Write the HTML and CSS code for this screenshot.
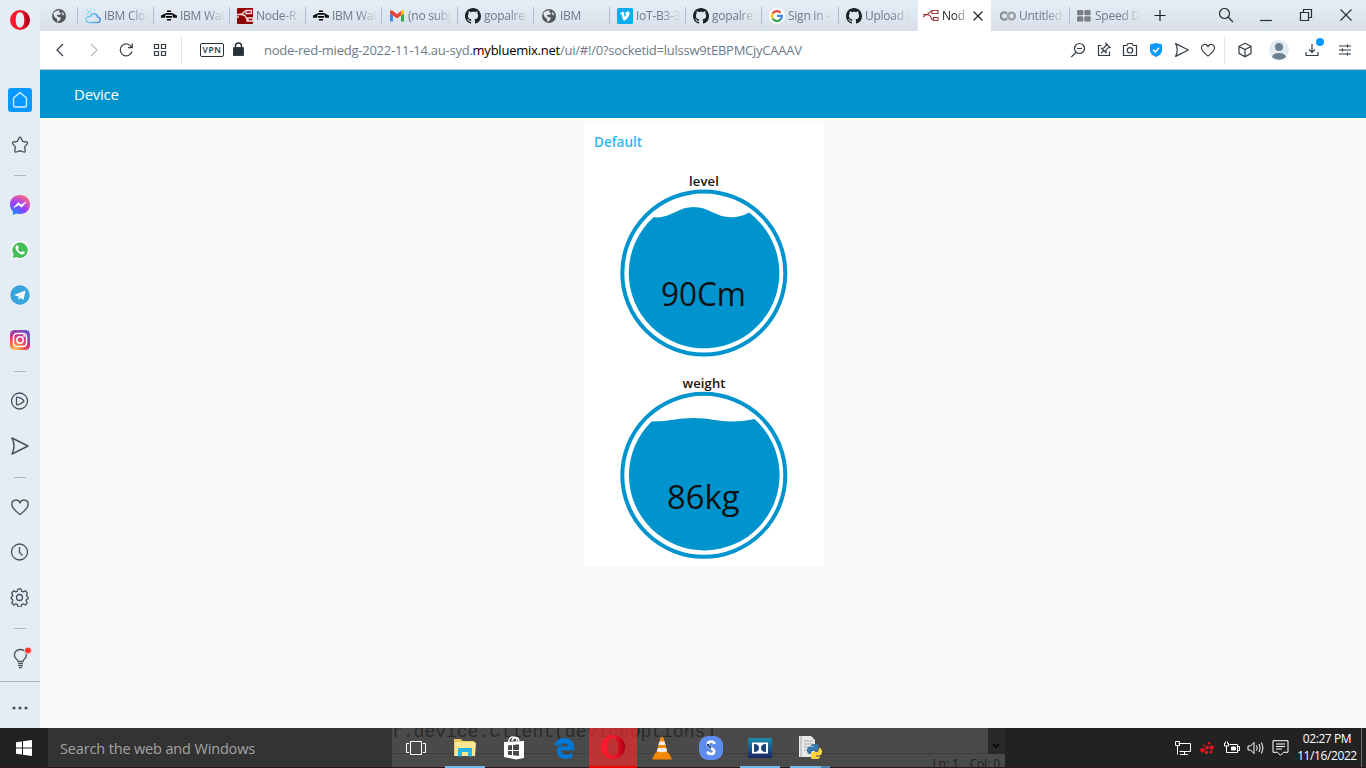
FILE: index.html
```html
<!DOCTYPE html>
<html lang="en">
<head>
<meta charset="utf-8">
<title>Node-RED Dashboard</title>
<link rel="stylesheet" href="styles.css">
</head>
<body>
<svg class="defs" width="0" height="0" aria-hidden="true">
  <symbol id="globe" viewBox="0 0 16 16"><circle cx="8" cy="8" r="7" fill="#55585b"/><path d="M2.300 5.500C4 2.800 6 2.200 9 2.500L8 4 10.500 5.500 8.500 6.800 5.500 7 7 9 10 9.500 9 12 6.500 14 6 11 3.500 9z" fill="#dfe7ee"/><path d="M11 3.500l2.500 3-2 1z" fill="#dfe7ee"/></symbol>
  <symbol id="bee" viewBox="0 0 16 16"><path d="M6 2.500h4v1.500H6zM5 5h6v1.800H5zM5 8h6v1.800H5zM6 11h4v1.500H6z" fill="#000"/><path d="M5 5L0 7.500v2.300h4zM11 5l5 2.500v2.300h-4z" fill="#111"/></symbol>
  <symbol id="github" viewBox="0 0 16 16"><path fill="#1c2129" d="M8 0C3.580 0 0 3.580 0 8c0 3.540 2.290 6.530 5.470 7.590.4.070.55-.17.55-.38 0-.19-.01-.82-.01-1.490-2.010.37-2.530-.49-2.690-.94-.09-.23-.48-.94-.82-1.130-.28-.15-.68-.52-.01-.53.63-.01 1.080.58 1.230.82.72 1.210 1.870.87 2.330.66.07-.52.28-.87.51-1.070-1.780-.2-3.640-.89-3.640-3.950 0-.87.31-1.590.82-2.150-.08-.2-.36-1.020.08-2.120 0 0 .67-.21 2.200.82.64-.18 1.320-.27 2-.27s1.360.09 2 .27c1.530-1.040 2.200-.82 2.200-.82.44 1.100.16 1.920.08 2.120.51.56.82 1.270.82 2.150 0 3.070-1.870 3.750-3.650 3.950.29.25.54.73.54 1.480 0 1.070-.01 1.930-.01 2.200 0 .21.15.46.55.38A8.010 8.010 0 0 0 16 8c0-4.420-3.580-8-8-8z"/></symbol>
  <symbol id="plane" viewBox="0 0 20 20"><path d="M2 2l16 8-16 8q4-8 0-16z" fill="none" stroke="currentColor" stroke-width="1.500" stroke-linejoin="round"/></symbol>
  <symbol id="heart" viewBox="0 0 20 20"><path d="M10 17.500C6.500 14.800 1.800 11.500 1.800 7.200 1.800 2.600 7.800 1.300 10 5.600 12.200 1.300 18.200 2.600 18.200 7.200 18.200 11.500 13.500 14.800 10 17.500z" fill="none" stroke="currentColor" stroke-width="1.400"/></symbol>
  <symbol id="opera" viewBox="0 0 20 20"><path fill-rule="evenodd" d="M10 0a10 10 0 1 0 0 20a10 10 0 0 0 0-20zM10 2.300c2.800 0 4.300 3.500 4.300 7.700s-1.500 7.700-4.300 7.700S5.700 14.200 5.700 10 7.200 2.300 10 2.300z" fill="url(#og)"/></symbol>
  <linearGradient id="og"><stop offset="0" stop-color="#ff1b2d"/><stop offset=".55" stop-color="#f3142c"/><stop offset="1" stop-color="#a70014"/></linearGradient>
  <radialGradient id="mg" cx=".2" cy="1" r="1.100"><stop offset="0" stop-color="#1092ff"/><stop offset=".55" stop-color="#9a3cff"/><stop offset="1" stop-color="#ff6a78"/></radialGradient>
  <radialGradient id="ig" cx=".25" cy="1" r="1.100"><stop offset="0" stop-color="#ffd15c"/><stop offset=".35" stop-color="#f9653f"/><stop offset=".65" stop-color="#d52f86"/><stop offset="1" stop-color="#6456cb"/></radialGradient>
  <linearGradient id="dg" x2="0" y2="1"><stop offset="0" stop-color="#1c8db0"/><stop offset="1" stop-color="#1c2560"/></linearGradient>
  <linearGradient id="cg"><stop offset="0" stop-color="#7cd8f5"/><stop offset="1" stop-color="#4b91ee"/></linearGradient>
</svg>

<div class="browser">
  <aside class="side">
    <div class="side-logo"><svg width="20" height="20"><use href="#opera"/></svg></div>
    <div class="side-item"><span class="home"><svg width="16" height="18" viewBox="0 0 16 18"><path d="M1.500 7L8 1.500 14.500 7v7q0 2-2 2h-9q-2 0-2-2z" fill="none" stroke="#d9efff" stroke-width="1.300" stroke-linejoin="round"/></svg></span></div>
    <div class="side-item"><svg width="18" height="18" viewBox="0 0 18 18"><path d="M8 2q1-1.500 2 0l1.700 3.300 4 .7q1.600.5.500 1.800l-2.500 2.900.5 4.300q0 1.500-1.500 1L9 14.800 5.300 16q-1.500.5-1.500-1l.5-4.300L1.800 7.800Q.7 6.500 2.300 6l4-.7z" fill="none" stroke="currentColor" stroke-width="1.300"/></svg></div>
    <div class="side-rule short"></div>
    <div class="side-item"><svg width="20" height="20" viewBox="0 0 20 20"><path d="M10 0C4 0 0 4 0 9.500c0 3 1.200 5.500 3 7.200V20l3.200-1.500c1.200.4 2.500.5 3.800.5 6 0 10-4 10-9.500S16 0 10 0z" fill="url(#mg)"/><path d="M4 12.500l4.200-5 3.100 2.300L16 7l-4.300 5.200-3.100-2.300z" fill="#fff" stroke="#fff" stroke-width=".7"/></svg></div>
    <div class="side-item"><svg width="20" height="20" viewBox="0 0 20 20"><path d="M1 19.500L2.300 15A9.200 9.200 0 1 1 6 18.200z" fill="#f8fbf8"/><path d="M2.500 18l1.200-3.500A7.700 7.700 0 1 1 6.500 17z" fill="#45bd58"/><path d="M6.300 5.500l1.500-.2 1 2.500-1 1.200c.8 1.600 1.900 2.500 3.400 3.200l1.200-1.300 2.400 1.200c0 1.600-1.100 2.500-2.600 2.500C9 14 5 10 5.500 7z" fill="#fff"/></svg></div>
    <div class="side-item"><svg width="20" height="20" viewBox="0 0 20 20"><circle cx="10" cy="10" r="9.700" fill="#36a5dc"/><path d="M4 9.900l11.500-4.400-2 9.500-3-2-1.700 1.700-.5-3.300z" fill="#fff"/><path d="M8.300 11.400l4.700-4-3.500 4.600-.7 2.700z" fill="#b7dced"/></svg></div>
    <div class="side-item"><svg width="20" height="20" viewBox="0 0 20 20"><rect width="20" height="20" rx="4.500" fill="url(#ig)"/><rect x="3.500" y="3.500" width="13" height="13" rx="3.500" fill="none" stroke="#fff" stroke-width="1.500"/><circle cx="10" cy="10" r="3.200" fill="none" stroke="#fff" stroke-width="1.500"/><circle cx="14" cy="6" r="1" fill="#fff"/></svg></div>
    <div class="side-rule"></div>
    <div class="side-item"><svg width="20" height="20" viewBox="0 0 20 20"><circle cx="9.500" cy="10" r="8" fill="none" stroke="currentColor" stroke-width="1.300"/><path d="M6.500 7q0-1 1-.8 3.500.6 6 3 .8.800 0 1.600-2.500 2.400-6 3-1 .2-1-.8z" fill="none" stroke="currentColor" stroke-width="1.300"/></svg></div>
    <div class="side-item"><svg width="20" height="20"><use href="#plane"/></svg></div>
    <div class="side-rule"></div>
    <div class="side-item"><svg width="20" height="20"><use href="#heart"/></svg></div>
    <div class="side-item"><svg width="20" height="20" viewBox="0 0 20 20"><circle cx="9.500" cy="10" r="8" fill="none" stroke="currentColor" stroke-width="1.300"/><path d="M9.500 5v5.500l3 3" fill="none" stroke="currentColor" stroke-width="1.300"/></svg></div>
    <div class="side-item"><svg width="20" height="20" viewBox="0 0 20 20"><path d="M8 1.800h3l.6 2.300 1.700.8 2.100-1.200 2 2.200-1 2.200.6 1.500 1.300.4M8 1.800l-.6 2.300-1.700.8-2.100-1.200-2 2.500 1.200 2-.5 1.400-1.100.4v1.800l1.200.4.5 1.400-1.200 2.100 2 2.300 2.100-1.100 1.600.8.600 2.100h3l.6-2.200 1.600-.8 2.100 1.200 2-2.400-1.200-2 .6-1.400 1.400-.4v-1.700" fill="none" stroke="currentColor" stroke-width="1.300" stroke-linejoin="round"/><circle cx="9.500" cy="10.500" r="3" fill="none" stroke="currentColor" stroke-width="1.300"/></svg></div>
    <div class="side-rule"></div>
    <div class="side-item"><svg width="24" height="24" viewBox="0 0 24 24"><path d="M10 15.500Q9.800 14 8.200 12.800C4.500 9 7 3.500 12.500 3.500S20 9 16.800 12.800Q15.200 14 15 15.500zM10 17.700h5M10 19.700h5M11 21.700h3" fill="none" stroke="currentColor" stroke-width="1.300"/><circle cx="20" cy="4.500" r="3.600" fill="#ff3b30" stroke="#e4ecf4"/></svg></div>
    <div class="side-more"><svg width="18" height="4"><circle cx="3" cy="2" r="1.600"/><circle cx="9" cy="2" r="1.600"/><circle cx="15" cy="2" r="1.600"/></svg></div>
  </aside>

  <div class="main">
    <div class="tabs">
      <div class="tab pinned"><svg width="16" height="16"><use href="#globe"/></svg></div>
      <div class="tab"><svg width="16" height="16" viewBox="0 0 16 16"><path d="M4 14.500h8.500c3.500-.5 3.500-5.300 0-5.500C12 4.800 6 4.800 5.500 8.500 0 7.500-.5 14 4 14.500z" fill="none" stroke="url(#cg)" stroke-width="1.500"/><path d="M2.500 6.500Q3 3.300 6 3.200M1 5l-.7-.4M3 2.500L2.200 1.300M6 1.300V0M9 2.400l.8-1.100" fill="none" stroke="#72dce1" stroke-width="1.100"/></svg><span>IBM Clo</span></div>
      <div class="tab"><svg width="16" height="16"><use href="#bee"/></svg><span>IBM Wat</span></div>
      <div class="tab"><svg width="16" height="16" viewBox="0 0 16 16"><rect width="16" height="16" rx="1" fill="#8f0000"/><path d="M0 6.500h3q2 0 3.500-2t3-1.500M4 6.500q4 0 5 3t3 2.500M9 2.500h5.500v3H9zM10 10h6v3h-6zM0 9h2" fill="none" stroke="#f3dada" stroke-width="1.300"/></svg><span>Node-R</span></div>
      <div class="tab"><svg width="16" height="16"><use href="#bee"/></svg><span>IBM Wat</span></div>
      <div class="tab"><svg width="16" height="16" viewBox="0 0 16 16"><path d="M1 4v9.500h3V7z" fill="#4285f4"/><path d="M12 7v6.500h3V4z" fill="#34a853"/><path d="M1 3.500C1 1.500 3 2 4 3l4 3.300L12 3v4.500l-4 3-4-3L1 5.500z" fill="#ea4335"/><path d="M12 3c1.200-1.100 3-1 3 1v1.500l-3 2.200z" fill="#fbbc04"/></svg><span>(no subj</span></div>
      <div class="tab"><svg width="16" height="16"><use href="#github"/></svg><span>gopalre</span></div>
      <div class="tab"><svg width="16" height="16"><use href="#globe"/></svg><span>IBM</span></div>
      <div class="tab"><svg width="16" height="16" viewBox="0 0 16 16"><rect width="16" height="16" rx="1.500" fill="#0badef"/><path d="M3 5.500l2.300-1.800c1.800-.8 1.800 3.300 2.700 5.300.7-.7 1.600-2.300 1-3-.3-.5-1-.3-1-.3.500-2.400 4.500-3.200 4.700-.5-.2 2.800-3.600 7.200-5.500 7.200-2 0-2-5.500-2.800-6.500l-1 .4z" fill="#fff"/></svg><span>IoT-B3-3</span></div>
      <div class="tab"><svg width="16" height="16"><use href="#github"/></svg><span>gopalre</span></div>
      <div class="tab wide"><svg width="16" height="16" viewBox="0 0 16 16"><circle cx="8" cy="8" r="8" fill="#fff"/><g fill="none" stroke-width="2.300"><path d="M11.500 4.700A5 5 0 0 0 3.600 5.500" stroke="#ea4335"/><path d="M3.600 5.500a5 5 0 0 0 0 5" stroke="#fbbc05"/><path d="M3.600 10.500a5 5 0 0 0 7.800 1.200" stroke="#34a853"/><path d="M11.400 11.700Q13 10 12.900 7.900H8" stroke="#4285f4"/></g></svg><span>Sign in -</span></div>
      <div class="tab last"><svg width="16" height="16"><use href="#github"/></svg><span>Upload f</span></div>
      <div class="tab active"><svg width="16" height="16" viewBox="0 0 16 16"><path d="M0 6.500h3q2 0 3.500-2t2.500-1.200M3 6.500q4 0 5 3t3 2M9 2.500h6v3H9zM10.500 9.500H15v3h-4.500zM0 9l3-2.500" fill="none" stroke="#a33c40" stroke-width="1.200"/></svg><span>Nod</span><svg class="x" width="12" height="12"><path d="M1.500 1.500l9 9M10.500 1.500l-9 9" stroke="#222" stroke-width="1.200"/></svg></div>
      <div class="tab nosep"><svg width="16" height="16" viewBox="0 0 16 16"><path d="M7 5.600A3.600 3.600 0 1 0 7 10.400" fill="none" stroke="#8e9297" stroke-width="2.400"/><circle cx="11.500" cy="8" r="3.400" fill="none" stroke="#9b9fa3" stroke-width="2.400"/></svg><span>Untitled</span></div>
      <div class="tab speed"><svg width="14" height="12"><g fill="#7b7f83"><rect width="6.300" height="5.300" rx="1.200"/><rect x="7.300" width="6.300" height="5.300" rx="1.200"/><rect y="6.300" width="6.300" height="5.300" rx="1.200"/><rect x="7.300" y="6.300" width="6.300" height="5.300" rx="1.200"/></g></svg><span>Speed D</span></div>
      <div class="newtab"><svg width="12" height="12"><path d="M.5 5.500h11M6 0v11" stroke="#222" stroke-width="1.200"/></svg></div>
      <div class="wincontrols">
        <svg width="16" height="16" viewBox="0 0 16 16"><circle cx="6.500" cy="5.500" r="5" /><path d="M10 9l5 5"/></svg>
        <svg width="16" height="16" viewBox="0 0 16 16"><path d="M2 12.500h12"/></svg>
        <svg width="16" height="16" viewBox="0 0 16 16"><path d="M2.500 4.500h8v8h-8zM5.500 4.500V1.500h8v8H11"/></svg>
        <svg width="16" height="16" viewBox="0 0 16 16"><path d="M2.500 1.500l11 11M13.500 1.500l-11 11"/></svg>
      </div>
    </div>

    <div class="address">
      <div class="nav">
        <svg width="16" height="16"><path d="M10 2L4 8l6 6"/></svg>
        <svg class="off" width="16" height="16"><path d="M5 2l6 6-6 6"/></svg>
        <svg width="16" height="16"><path d="M12.600 5.200A6 6 0 1 0 13 9.500M13.300 1.500v4.200H9.100"/></svg>
        <svg width="16" height="16"><path d="M2.500 2.500h4v4h-4zM9.500 2.500h4v4h-4zM2.500 9.500h4v4h-4zM9.500 9.500h4v4h-4z"/></svg>
      </div>
      <div class="vpn">VPN</div>
      <svg class="lock" width="11" height="14"><path d="M2.500 6V4a3 3 0 0 1 6 0v2" fill="none" stroke="#25313b" stroke-width="1.500"/><rect y="5.500" x=".5" width="10" height="8" rx="1" fill="#25313b"/></svg>
      <div class="url">node-red-miedg-2022-11-14.au-syd.<b>mybluemix.net</b>/ui/#!/0?socketid=lulssw9tEBPMCjyCAAAV</div>
      <div class="tools">
        <svg width="16" height="16"><circle cx="9.500" cy="6.500" r="5"/><path d="M6 10.300L1.300 15M7 6.500h5"/></svg>
        <svg width="16" height="16"><path d="M5.500 3.500H2.500v10h11v-4M10 1.500l4 4-1.700.2-2.300 2.500v2.300L5.500 6.200l2.300-.2L10.200 3.500zM7.700 8.500L5 11.300"/></svg>
        <svg width="16" height="16"><path d="M1.500 3.500h3.300L6 1.500h4l1.200 2h3.300v10h-13z"/><circle cx="8" cy="8.300" r="2.700"/></svg>
        <svg width="16" height="16"><path d="M8 1l6 1.500v6Q13.500 13 8 15 2.500 13 2 8.500v-6z" fill="#0799ff" stroke="none"/><path d="M5 7.700L7.300 10 11 5.800" stroke="#fff" stroke-width="1.600"/></svg>
        <svg width="16" height="16"><use href="#plane"/></svg>
        <svg width="16" height="16"><use href="#heart"/></svg>
      </div>
      <div class="account">
        <svg width="16" height="16"><path d="M8 1.300l6 3v7L8 14.700l-6-3.400v-7zM2 4.500l6 3 6-3M8 7.500v7"/></svg>
        <svg width="20" height="20"><circle cx="10" cy="10" r="10" fill="#e2eaf1" stroke="none"/><circle cx="10" cy="7" r="4" fill="#6b7f92" stroke="none"/><path d="M3 17.200Q4 13 10 13t7 4.200Q10 22.500 3 17.200z" fill="#6b7f92" stroke="none"/></svg>
        <svg class="dl" width="20" height="24"><path d="M8 6v8.500M5 11.500l3 3 3-3M2 14v3.500h12V14"/><circle cx="16" cy="4" r="4" fill="#0799ff" stroke="none"/></svg>
        <svg class="menu" width="14" height="14"><path d="M1 3h12M1 7h12M1 11h12M9.500 1.500v3M4.500 5.500v3M9.500 9.500v3"/></svg>
      </div>
    </div>

    <header class="appbar">Device</header>
    <main class="page">
      <section class="card">
        <h2>Default</h2>
        <div class="gauge">
          <h3>level</h3>
          <svg width="168" height="168" viewBox="620 189 168 168">
            <circle cx="703.800" cy="273" r="81.500" fill="none" stroke="#0094ce" stroke-width="4"/>
            <path d="M654 217.300C671 218.500 678 207 693.500 207S716 217.300 731 217.300Q741 217.300 749 212.600A75.300 75.300 0 1 1 653.500 217.200z" fill="#0094ce"/>
            <text x="661" y="306" textLength="85" lengthAdjust="spacingAndGlyphs">90Cm</text>
          </svg>
        </div>
        <div class="gauge second">
          <h3>weight</h3>
          <svg width="168" height="168" viewBox="620 391.500 168 168">
            <circle cx="703.800" cy="475.800" r="81.500" fill="none" stroke="#0094ce" stroke-width="4"/>
            <path d="M651.500 421.900C669 422.200 677 418.500 693.500 418.500S715 421.900 731 421.900Q745 421.900 754.500 419.500A75.300 75.300 0 1 1 651.500 421.900z" fill="#0094ce"/>
            <text x="667" y="509.300" textLength="72.500" lengthAdjust="spacingAndGlyphs">86kg</text>
          </svg>
        </div>
      </section>
    </main>
  </div>
</div>

<footer class="taskbar">
  <div class="ghost"><div class="code">r.device.Client(deviceOptions)</div><div class="status"><span>Ln: 1</span><span>Col: 0</span></div><div class="scroll"><svg width="8" height="6"><path d="M1 1l3 3 3-3" fill="none" stroke="#0c0c0c" stroke-width="2"/></svg></div></div>
  <div class="start"><svg width="16" height="16"><path d="M0 2.300l6-.8v6H0zM7 1.300L16 0v7.500H7zM0 8.500h6v6l-6-.8zM7 8.500h9V16l-9-1.300z" fill="#fff"/></svg></div>
  <div class="search">Search the web and Windows</div>
  <div class="apps">
    <div class="app"><svg width="20" height="16"><path d="M4.500 1.500h11v13h-11zM3 3.500H.5v9H3M17 3.500h2.500v9H17" fill="none" stroke="#fff"/></svg></div>
    <div class="app open"><svg width="22" height="20"><path d="M0 1h7l1.500 2H20v15H0z" fill="#eec75d"/><path d="M1 4h19l2 1-1 13H1z" fill="#ffe694"/><path d="M4 10h14v8.500h-4V14H8v4.500H4z" fill="#26b5e5"/></svg></div>
    <div class="app"><svg width="22" height="24"><path d="M5.500 6Q6 1 10 1t4 4M9 5q.500-3 3.500-3.500T16 5" fill="none" stroke="#fff" stroke-width="1.300"/><path d="M1 6l20-1v17l-8 1.500L1 21z" fill="#fff"/><path d="M5 9.500l4-.5v5H5zM10 9l6-.7V14h-6zM5 15h4v4.300l-4-.5zM10 15h6v5l-6-.7z" fill="#484848"/></svg></div>
    <div class="app edge"><svg width="20" height="21" viewBox="0 0 20 21"><path d="M0 9C1 3 5 0 10.500 0 16.500 0 20 4.500 20 9.500v2.800H7c.3 4.700 7 5.400 11.500 2.700v4.300C12 22.500 3 21 3 13c0-3 1.500-5.500 4.500-6.800C4.500 6.300 1.700 7.300 0 9zm7-.5h7C13.800 4 7.500 4.300 7 8.500z" fill="#0078d7"/></svg></div>
    <div class="app current"><svg width="24" height="24"><use href="#opera"/></svg></div>
    <div class="app"><svg width="20" height="23"><path d="M3 16h14l3 6.500H0z" fill="#f28600"/><path d="M10 0l1.500.5L16 17q-6 3-12 0L8.500.5z" fill="#f58b09"/><path d="M7.500 4.500h5l1 3.500h-7zM5.800 11h8.500l.9 3.300q-5.200 2-10.400 0z" fill="#eee"/></svg></div>
    <div class="app"><svg width="24" height="24"><rect width="24" height="24" rx="9" fill="#5e8bf0"/><path d="M15.500 8Q15 5.500 12 5.500T8.800 8.500Q9 10.500 12 12t3.300 3.500Q15 18 12 18t-3.500-2.500" fill="none" stroke="#fff" stroke-width="2.600"/><path d="M8.800 8Q9 10.500 12 12" fill="none" stroke="#233d76" stroke-width="2"/></svg></div>
    <div class="app open dolby"><svg width="24" height="20"><rect width="24" height="20" rx="1" fill="url(#dg)"/><path d="M4 4.500h16v11H4z" fill="#fff"/><path d="M6 6q5 0 5 4t-5 4zM18 6q-5 0-5 4t5 4z" fill="#1c4577"/></svg></div>
    <div class="app open py"><svg width="24" height="24"><path d="M1 0h12l4 4v17H1z" fill="#e8e8e8"/><path d="M3 0v21M6 5h9M6 8h9M6 11h6M6 14h3" stroke="#aaa"/><path d="M15 8h4q1.500 0 1.500 1.500V13q0 2-2 2H15q-2 0-2 3h-2q-2.500-1-2-5 .5-2.500 3-2.500h4V10h-3q0-2 2-2z" fill="#3876a8"/><path d="M18 23h-3q-2 0-2-1.500V18q0-2 2-2h3.500q2.500 0 2.500-4h1q2.300 1 2 4.500-.5 3-3 3h-3v1h4q0 2.500-3 2.500z" fill="#ffd43e"/></svg></div>
  </div>
  <div class="tray">
    <svg width="18" height="16"><path d="M4.500 3.500h12v8h-11M10.500 11.500v3M6 14.500h8M1.500 1.500h4v4h-4zM3.500 6v8.500" /></svg>
    <svg width="16" height="16"><g fill="#e4151e" stroke="none"><circle cx="3.500" cy="10.300" r="2.300"/><circle cx="8" cy="7.700" r="2"/><circle cx="12.800" cy="7.500" r="2.200"/><circle cx="7.500" cy="12.500" r="1.700"/><circle cx="12" cy="12" r="1.500"/><circle cx="10" cy="3.300" r="1.300"/><circle cx="5" cy="5.500" r="1"/></g></svg>
    <svg width="17" height="16"><path d="M1.500 3v3h4V3M2.500 1.500v2M4.500 1.500v2M3.500 6v6.500H7M6.500 4.500h8v8h-8M15 6.500h1.500v4H15"/><path d="M8.500 7h4v3h-4z" fill="#fff"/></svg>
    <svg width="17" height="16"><path d="M1 6h2.500L7 2.500v11L3.500 10H1zM9.500 5.500q1.500 2.500 0 5M12 4q2.500 4 0 8M14.500 2.500q3 5.500 0 11"/></svg>
    <svg width="17" height="16"><path d="M1 .7h15v11.600h-4.500L8.500 15.300 5.500 12.300H1zM4 4h9M4 6.500h9M4 9h6"/></svg>
    <div class="clock"><span>02:27 PM</span><span>11/16/2022</span></div>
  </div>
</footer>
</body>
</html>
```
FILE: styles.css
```css
* { box-sizing: border-box; }
body {
  margin: 0;
  width: 1366px;
  height: 768px;
  overflow: hidden;
  font-family: "Open Sans", "Noto Sans", sans-serif;
  font-size: 12px;
  color: #000;
}
svg { display: block; flex: none; }
.defs { position: absolute; }
.browser { display: flex; height: 728px; }

.side {
  display: flex;
  flex-direction: column;
  width: 40px;
  flex: none;
  background: #e4ecf4;
  color: #46535f;
}
.side-logo { height: 78px; padding: 10px; }
.side-item { display: flex; align-items: center; justify-content: center; height: 45px; padding-bottom: 1px; }
.side-rule { height: 16px; display: flex; align-items: center; justify-content: center; }
.side-rule.short { height: 15px; }
.side-rule::before { content: ""; width: 12px; height: 1px; background: #a9b9c7; }
.home { display: flex; align-items: center; justify-content: center; width: 24px; height: 24px; border-radius: 3px; background: #0799ff; }
.side-more { border-top: 1px solid #a9b9c7; flex: 1; padding: 24px 11px 0; fill: #46535f; }

.main { flex: 1; display: flex; flex-direction: column; min-width: 0; }
.tabs {
  display: flex;
  height: 31px;
  flex: none;
  background: linear-gradient(#e4edf5 10%, #d7dee7);
  color: #6c7b8a;
}
.tab { display: flex; align-items: center; gap: 3px; width: 76px; padding-left: 7px; flex: none; position: relative; }
.tab:not(.pinned):not(.active):not(.nosep)::before { content: ""; position: absolute; left: -1px; top: 7px; height: 17px; width: 1px; background: #b0becb; }
.tab span { flex: 1; margin-right: 1px; overflow: hidden; white-space: nowrap; letter-spacing: -.25px; -webkit-mask-image: linear-gradient(90deg, #000 26px, transparent 45px); mask-image: linear-gradient(90deg, #000 26px, transparent 45px); }
.tab.pinned { width: 38px; padding-left: 11px; }
.tab.wide { width: 77px; }
.tab.last { width: 79px; }
.tab.active { width: 73px; background: #fff; color: #222; padding-left: 5px; }
.tab.active span { -webkit-mask-image: linear-gradient(90deg, #000 12px, transparent 28px); mask-image: linear-gradient(90deg, #000 12px, transparent 28px); }
.tab.active .x { margin-right: 7px; }
.tab.nosep { width: 79px; padding-left: 9px; }
.tab.speed { width: 77px; padding-left: 7px; gap: 4px; }
.newtab { display: flex; align-items: center; padding-left: 7px; }
.wincontrols { display: flex; align-items: center; margin-left: auto; padding-right: 12px; gap: 24px; fill: none; stroke: #2b2f33; stroke-width: 1.2; }

.address {
  display: flex;
  align-items: center;
  height: 39px;
  flex: none;
  background: #fff;
  border-bottom: 1px solid #b8c0c8;
  fill: none;
  stroke: #333c44;
  stroke-width: 1.2;
  color: #333c44;
}
.nav { display: flex; gap: 17px; align-items: center; padding: 0 13px; height: 28px; width: 142px; border-right: 1px solid #e2e6ea; }
.nav .off { stroke: #b8bec4; }
.vpn { width: 24px; height: 14px; margin-left: 18px; border: 1px solid #25313b; border-radius: 2px; font-size: 8.5px; font-weight: 600; letter-spacing: .6px; line-height: 12px; text-align: center; color: #25313b; }
.lock { margin: -2px 0 0 9px; }
.url { margin-left: 20px; width: 560px; white-space: nowrap; font-size: 13px; letter-spacing: -.24px; color: #6c7b8a; }
.url b { font-weight: 400; color: #000; }
.tools { display: flex; gap: 10px; margin-left: auto; padding-right: 8px; height: 28px; align-items: center; border-right: 1px solid #e2e6ea; }
.account { display: flex; align-items: center; width: 141px; padding-left: 12px; }
.account svg:nth-child(2) { margin-left: 16px; }
.account .dl { margin: 0 0 0 15px; }
.account .menu { margin-left: 14px; }

.appbar { height: 48px; flex: none; padding-left: 34px; background: #0094ce; color: #fff; font-size: 15px; line-height: 49px; letter-spacing: -.25px; }
.page { flex: 1; background: #fafafa; padding: 5px 0 0 544px; }
.card { width: 240px; height: 443px; background: #fff; overflow: hidden; }
.card h2 { margin: 10px 0 0 10px; font-size: 13.5px; line-height: 18px; font-weight: 600; color: #2cb7fb; }
.gauge { display: flex; flex-direction: column; align-items: center; margin-top: 21px; }
.gauge.second { margin-top: 17px; }
.gauge h3 { margin: 0 0 -1px; font-size: 13px; line-height: 18px; font-weight: 600; letter-spacing: .15px; color: #111; }
.gauge text { font-size: 32.5px; fill: #111; }

.taskbar { position: relative; display: flex; height: 40px; background: #232222; color: #fff; border-bottom: 1px solid #2a1820; }
.ghost { position: absolute; left: 392px; top: 0; width: 613px; height: 39px; background: #4a4a4a; overflow: hidden; }
.ghost .code { height: 27px; margin-top: -1px; padding-bottom: 18px; border-bottom: 1px solid #3d3d3d; font: 18px/11px "Courier New", "Liberation Mono", monospace; color: #2b2b2b; }
.ghost .status { display: flex; justify-content: flex-end; gap: 11px; padding: 1px 5px 0; color: #202020; line-height: 17px; letter-spacing: -.1px; }
.ghost .scroll { position: absolute; right: 0; top: 0; width: 17px; height: 26px; background: #292929; padding: 15px 0 0 4px; }
.start { width: 48px; padding: 12px 16px; position: relative; }
.search { width: 344px; position: relative; background: #333; color: #a3a3a3; padding-left: 12px; font-size: 14.5px; line-height: 41px; letter-spacing: -.15px; }
.apps { display: flex; position: relative; }
.app { display: flex; align-items: center; justify-content: center; width: 48px; height: 40px; margin-right: 1.2px; position: relative; }
.app.open::after { content: ""; position: absolute; left: 4px; bottom: 0; width: 40px; height: 2px; background: #76b9ed; }
.app.py::after { background: linear-gradient(90deg, #76b9ed 31px, #4d83ae 31px); }
.app.current { background: rgba(232, 43, 43, .72); border-bottom: 2px solid #f00000; }
.tray { display: flex; align-items: center; gap: 7.5px; margin-left: auto; margin-right: 4px; padding-right: 4px; border-right: 1px solid #6c6c6c; fill: none; stroke: #fff; stroke-width: 1; }
.clock { display: flex; flex-direction: column; align-items: center; width: 60px; margin: -2px 0 0 1px; font-size: 12px; line-height: 17px; letter-spacing: -.4px; white-space: nowrap; stroke: none; }
```
